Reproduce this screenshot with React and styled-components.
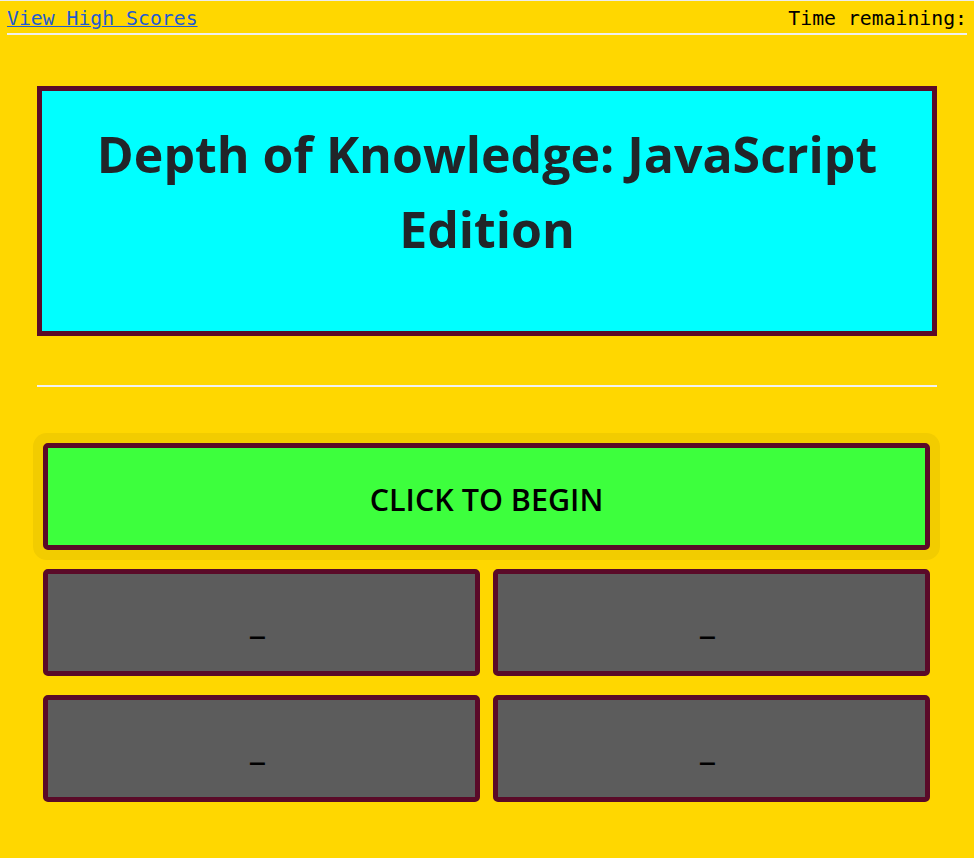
import React from 'react';
import styled, { createGlobalStyle } from 'styled-components';

const GlobalStyle = createGlobalStyle`
  html,
  body {
    margin: 0;
    background: #ffd700;
  }
  body {
    border-top: 1px solid #ececec;
    font-family: 'Open Sans', 'Liberation Sans', sans-serif;
    min-height: 857px;
  }
`;

const maroon = '#5a0a28';

const Header = styled.header`
  display: flex;
  justify-content: space-between;
  align-items: center;
  margin: 0 7px;
  padding-top: 3px;
  height: 29px;
  border-bottom: 2px solid #efefef;
  font-family: 'DejaVu Sans Mono', 'Liberation Mono', monospace;
  font-size: 19.8px;
  color: #000;
`;

const ScoresLink = styled.a`
  color: #1f5bd1;
  text-decoration: underline;
`;

const Main = styled.main`
  max-width: 900px;
  margin: 0 auto;
  padding-top: 51px;
`;

const TitleCard = styled.section`
  background: #00ffff;
  border: 5px solid ${maroon};
  padding: 26px 20px 64px;
  text-align: center;
`;

const Title = styled.h1`
  margin: 0;
  font-size: 50px;
  line-height: 75px;
  font-weight: 700;
  color: #212529;
`;

const Divider = styled.hr`
  margin: 49px 0 0;
  border: 0;
  border-top: 2px solid #f1f1f1;
`;

const ButtonGrid = styled.div`
  display: grid;
  grid-template-columns: 1fr 1fr;
  column-gap: 13px;
  row-gap: 19px;
  padding: 56px 7px 0 6px;
`;

const GameButton = styled.button`
  grid-column: ${(p) => (p.$wide ? '1 / -1' : 'auto')};
  height: 107px;
  background: ${(p) => (p.$wide ? '#3dff3d' : '#5c5c5c')};
  border: 5px solid ${maroon};
  border-radius: 5px;
  box-shadow: ${(p) => (p.$wide ? '0 0 0 10px #f2cc00' : 'none')};
  font-family: 'Open Sans', 'Liberation Sans', sans-serif;
  font-size: ${(p) => (p.$wide ? '30.5px' : '36px')};
  font-weight: ${(p) => (p.$wide ? 600 : 700)};
  color: #000;
  padding: ${(p) => (p.$wide ? '4px 0 0' : '0 8px 6px 0')};
  cursor: pointer;
`;

const answers = ['_', '_', '_', '_'];

const App = () => (
  <>
    <GlobalStyle />
    <Header>
      <ScoresLink href="#">View High Scores</ScoresLink>
      <span>Time remaining:</span>
    </Header>
    <Main>
      <TitleCard>
        <Title>Depth of Knowledge: JavaScript Edition</Title>
      </TitleCard>
      <Divider />
      <ButtonGrid>
        <GameButton $wide>CLICK TO BEGIN</GameButton>
        {answers.map((a, i) => (
          <GameButton key={i}>{a}</GameButton>
        ))}
      </ButtonGrid>
    </Main>
  </>
);

export default App;
